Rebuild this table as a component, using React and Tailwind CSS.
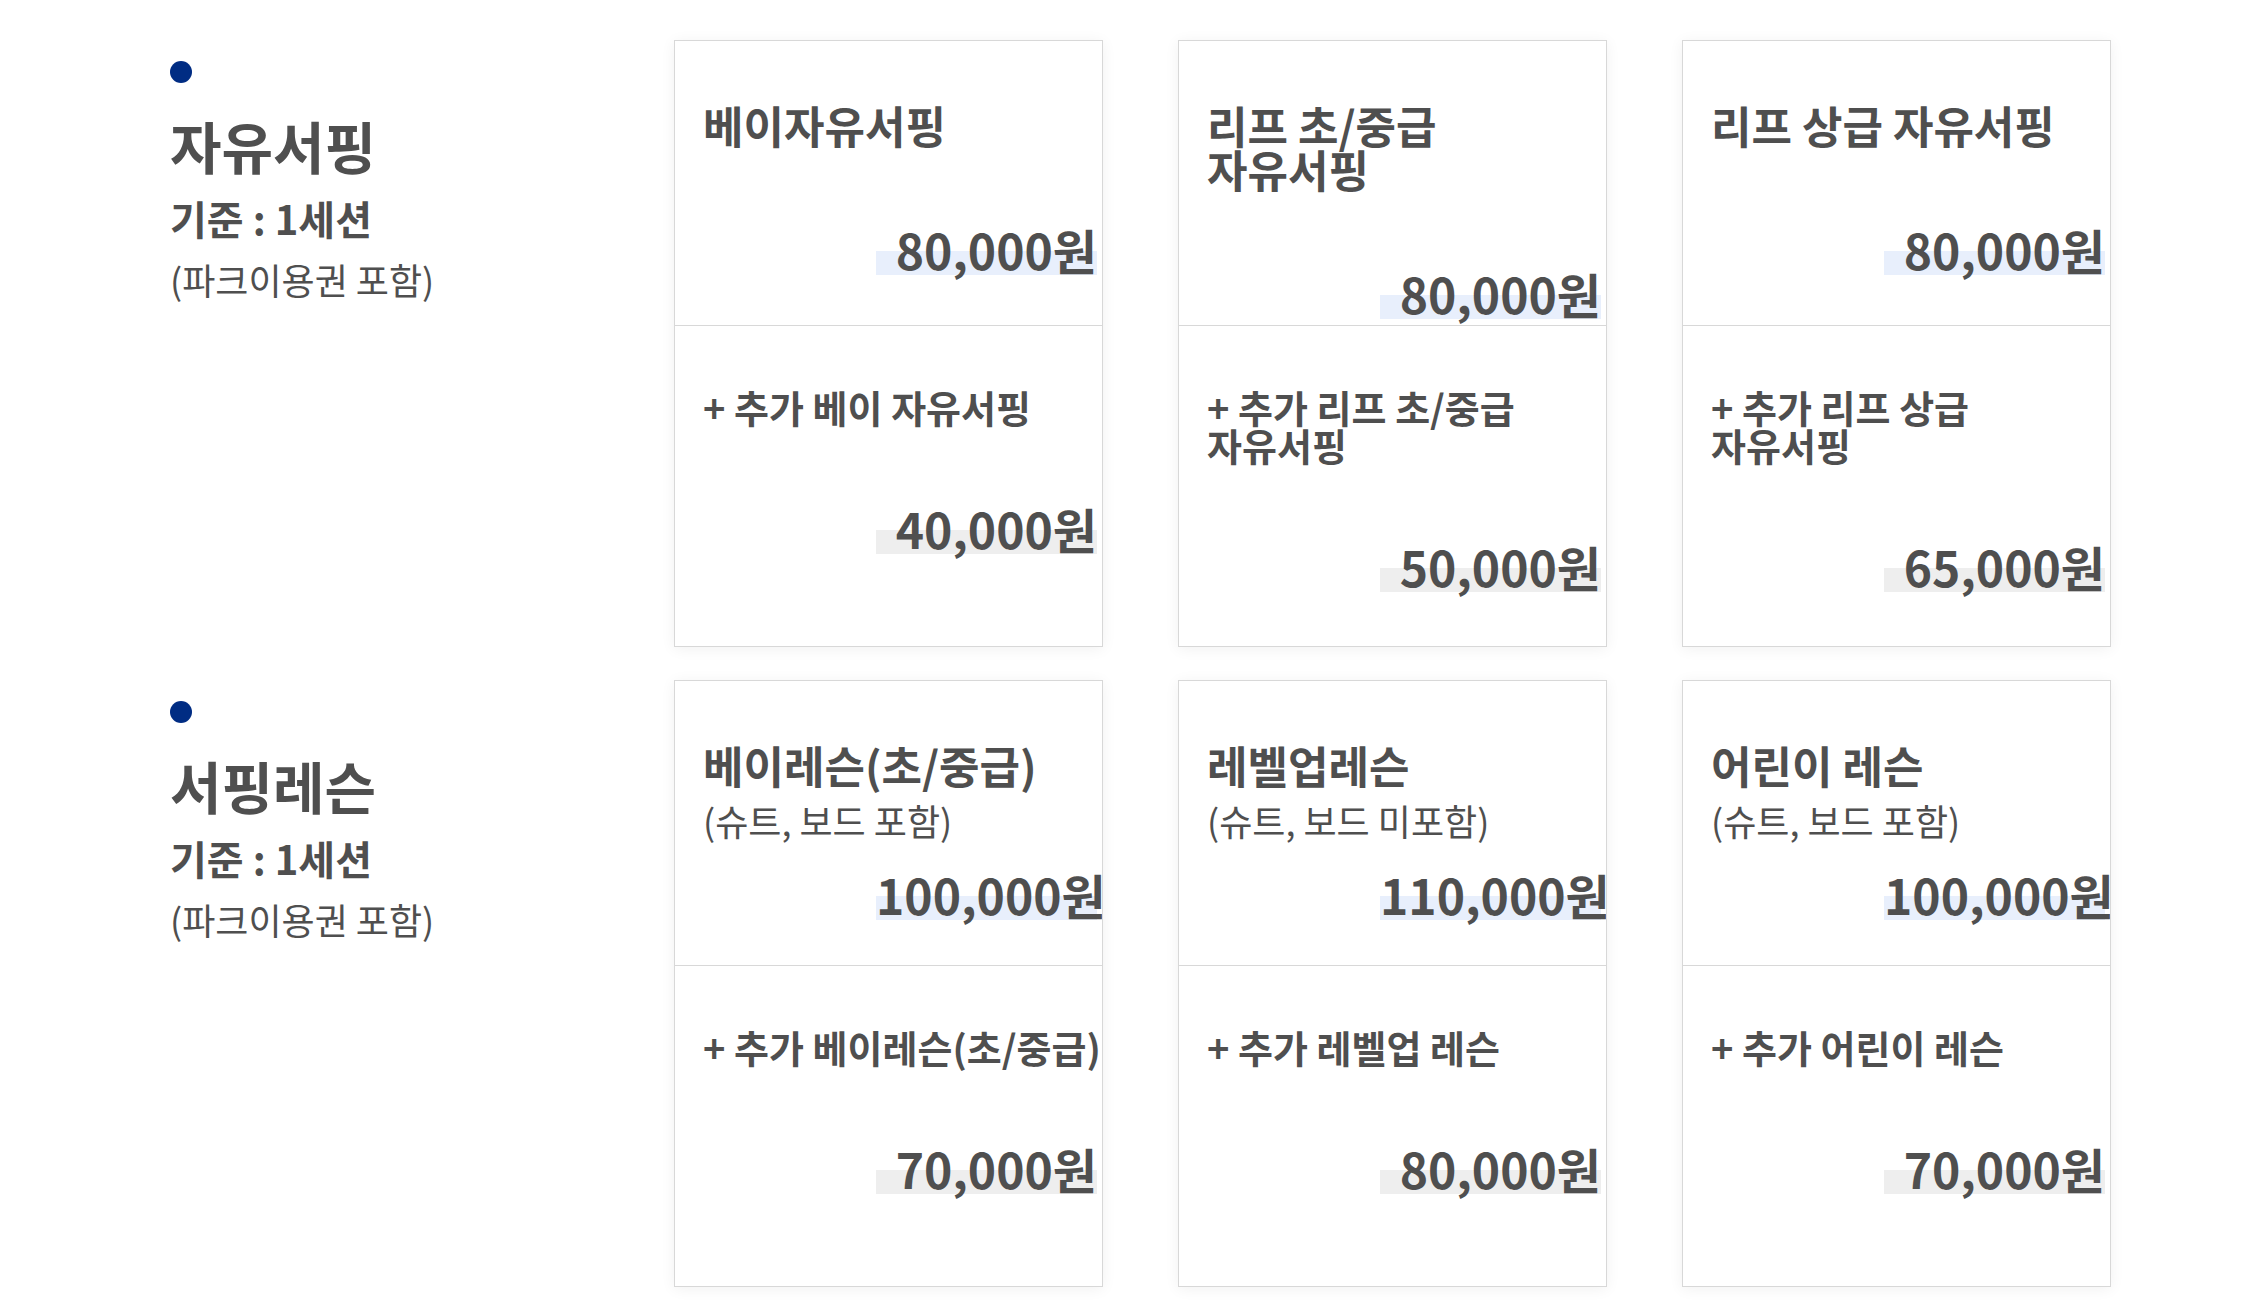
import React from 'react';

const FONT = "font-['Noto_Sans_CJK_KR','Noto_Sans',sans-serif]";

const SECTIONS = [
  {
    title: '자유서핑',
    cards: [
      { name: ['베이자유서핑'], price: '80,000원', extra: ['+ 추가 베이 자유서핑'], extraPrice: '40,000원' },
      { name: ['리프 초/중급', '자유서핑'], price: '80,000원', extra: ['+ 추가 리프 초/중급', '자유서핑'], extraPrice: '50,000원' },
      { name: ['리프 상급 자유서핑'], price: '80,000원', extra: ['+ 추가 리프 상급', '자유서핑'], extraPrice: '65,000원' }
    ]
  },
  {
    title: '서핑레슨',
    cards: [
      { name: ['베이레슨(초/중급)'], sub: '(슈트, 보드 포함)', price: '100,000원', extra: ['+ 추가 베이레슨(초/중급)'], extraPrice: '70,000원' },
      { name: ['레벨업레슨'], sub: '(슈트, 보드 미포함)', price: '110,000원', extra: ['+ 추가 레벨업 레슨'], extraPrice: '80,000원' },
      { name: ['어린이 레슨'], sub: '(슈트, 보드 포함)', price: '100,000원', extra: ['+ 추가 어린이 레슨'], extraPrice: '70,000원' }
    ]
  }
];

function Price({ value, tone, className = '' }) {
  // 글자 아래쪽 절반만 칠해지는 하이라이트
  const bg = tone === 'blue' ? 'bg-[#e8effc]' : 'bg-[#eeeeee]';
  return (
    <div className={`relative ml-[201px] w-[221px] whitespace-nowrap text-right text-[48px] leading-[48px] font-bold ${className}`}>
      <span className={`absolute left-0 right-0 bottom-[-2px] h-[24px] ${bg}`} />
      <span className="relative">{value}</span>
    </div>
  );
}

function PriceCard({ card }) {
  return (
    <div className="w-[429px] border border-[#d8d8d8] bg-white overflow-hidden shadow-[0_2px_14px_rgba(0,0,0,0.06)]">
      <div className="h-[285px] border-b border-[#d8d8d8] pt-[62px]">
        <div className="pl-[28px] text-[44px] leading-[44px] font-bold whitespace-nowrap">
          {card.name.map((line) => (
            <div key={line}>{line}</div>
          ))}
        </div>
        {card.sub ? (
          <div className="pl-[28px] mt-[16px] text-[36px] leading-[35px] whitespace-nowrap">{card.sub}</div>
        ) : null}
        <Price value={card.price} tone="blue" className={card.sub ? 'mt-[32px]' : 'mt-[78px]'} />
      </div>
      <div className="h-[320px] pt-[62px]">
        <div className="pl-[28px] text-[38px] leading-[38px] font-bold whitespace-nowrap">
          {card.extra.map((line) => (
            <div key={line}>{line}</div>
          ))}
        </div>
        <Price value={card.extraPrice} tone="gray" className="mt-[78px]" />
      </div>
    </div>
  );
}

export default function App() {
  return (
    <div className={`min-h-screen bg-white text-[#4f4f4f] pt-[40px] pl-[170px] ${FONT}`}>
      <div className="flex flex-col gap-[33px]">
        {SECTIONS.map((section) => (
          <div key={section.title} className="flex">
            <div className="w-[504px] shrink-0">
              <div className="mt-[21px] w-[22px] h-[22px] rounded-full bg-[#002c83]" />
              <div className="mt-[31px] text-[56px] leading-[62px] font-bold">{section.title}</div>
              <div className="mt-[18px] text-[40px] leading-[48px] font-bold">기준 : 1세션</div>
              <div className="mt-[15px] text-[36px] leading-[44px]">(파크이용권 포함)</div>
            </div>
            <div className="flex gap-[75px]">
              {section.cards.map((card, i) => (
                <PriceCard key={i} card={card} />
              ))}
            </div>
          </div>
        ))}
      </div>
    </div>
  );
}
